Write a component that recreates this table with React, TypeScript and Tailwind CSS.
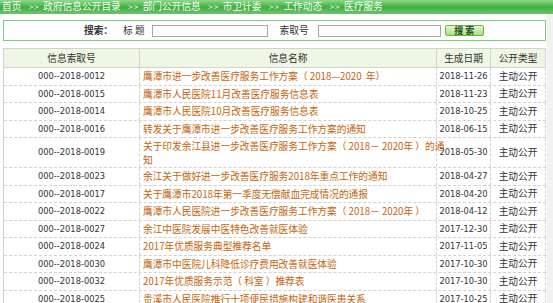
const rows = [
  ["000--2018-0012", "鹰潭市进一步改善医疗服务工作方案（ 2018—2020  年）", "2018-11-26"],
  ["000--2018-0015", "鹰潭市人民医院11月改善医疗服务信息表", "2018-11-23"],
  ["000--2018-0014", "鹰潭市人民医院10月改善医疗服务信息表", "2018-10-25"],
  ["000--2018-0016", "转发关于鹰潭市进一步改善医疗服务工作方案的通知", "2018-06-15"],
  ["000--2018-0019", "关于印发余江县进一步改善医疗服务工作方案（ 2018－ 2020年 ）的通\n知", "2018-05-30"],
  ["000--2018-0023", "余江关于做好进一步改善医疗服务2018年重点工作的通知", "2018-04-27"],
  ["000--2018-0017", "关于鹰潭市2018年第一季度无偿献血完成情况的通报", "2018-04-20"],
  ["000--2018-0022", "鹰潭市人民医院进一步改善医疗服务工作方案（ 2018－ 2020年 ）", "2018-04-12"],
  ["000--2018-0027", "余江中医院发展中医特色改善就医体验", "2017-12-30"],
  ["000--2018-0024", "2017年优质服务典型推荐名单", "2017-11-05"],
  ["000--2018-0030", "鹰潭市中医院儿科降低诊疗费用改善就医体验", "2017-10-30"],
  ["000--2018-0032", "2017年优质服务示范（ 科室 ）推荐表", "2017-10-30"],
  ["000--2018-0025", "贵溪市人民医院推行十项便民措施构建和谐医患关系", "2017-10-25"],
];

const crumbs = ["首页", "政府信息公开目录", "部门公开信息", "市卫计委", "工作动态", "医疗服务"];

const cjk = "font-['Noto_Sans_CJK_SC',sans-serif]";
const num = "font-['DejaVu_Sans',sans-serif] text-[8.3px] text-[#333]";

export default function App() {
  return (
    <div className={`w-[553px] h-[303px] overflow-hidden bg-white ${cjk} text-[9.7px] text-[#333]`}>
      {/* breadcrumb bar */}
      <div className="h-[14px] bg-gradient-to-b from-[#8ad98a] via-[#3fae3f] to-[#6cc46c] text-[#f4fff4] flex items-center gap-[4px] pl-[2px] leading-none">
        {crumbs.map((c, i) => (
          <span key={c} className="flex items-center gap-[4px]">
            {i > 0 && <span className="font-['DejaVu_Sans',sans-serif] text-[6.5px] ml-[3px]">&gt;&gt;</span>}
            <span>{c}</span>
          </span>
        ))}
      </div>

      <div className="flex">
        <div className="w-[547px] pl-[3px] pr-[1px]">
          {/* search */}
          <div className="mt-[6px] h-[21px] border border-[#7ccc7c] bg-white flex items-center">
            <span className="ml-[80px] font-bold">搜索：</span>
            <span className="ml-[10px]">标 题</span>
            <div className="ml-[7px] w-[116px] h-[12px] border border-[#a8a8a8]" />
            <span className="ml-[12px]">索取号</span>
            <div className="ml-[9px] w-[123px] h-[12px] border border-[#a8a8a8]" />
            <div className="ml-[4px] w-[39px] h-[11px] border border-[#6ab84a] rounded-[2px] bg-gradient-to-b from-[#e4f7cf] to-[#a9dd7e] flex items-center justify-center font-bold text-[9px] leading-none text-[#1d4d1d]">
              搜 索
            </div>
          </div>

          {/* table */}
          <div className="mt-[7px] border-l border-t border-[#d2d2d2]">
            <div className="flex h-[19px] bg-[#eef6e4] border-b border-[#d2d2d2]">
              <div className="w-[136px] border-r border-[#d2d2d2] flex items-center justify-center">信息索取号</div>
              <div className="w-[297px] border-r border-[#d2d2d2] flex items-center justify-center">信息名称</div>
              <div className="w-[54px] border-r border-[#d2d2d2] flex items-center justify-center">生成日期</div>
              <div className="w-[55px] border-r border-[#d2d2d2] flex items-center justify-center">公开类型</div>
            </div>
            {rows.map(([id, title, date]) => {
              const lines = title.split("\n");
              const tall = lines.length > 1;
              return (
                <div key={id} className={`flex border-b border-dashed border-[#d2d2d2] ${tall ? "h-[30px]" : "h-[17.5px]"}`}>
                  <div className={`w-[136px] border-r border-dashed border-[#d2d2d2] flex items-center justify-center ${num}`}>{id}</div>
                  <div className="w-[297px] border-r border-dashed border-[#d2d2d2] flex flex-col justify-center pl-[3px] text-[#c4640c] leading-[14px] whitespace-pre">
                    {lines.map((l) => (
                      <span key={l}>{l}</span>
                    ))}
                  </div>
                  <div className={`w-[54px] border-r border-dashed border-[#d2d2d2] flex items-center justify-center ${num}`}>{date}</div>
                  <div className="w-[55px] border-r border-dashed border-[#d2d2d2] flex items-center justify-center">主动公开</div>
                </div>
              );
            })}
          </div>
        </div>
        <div className="flex-1 bg-[#f1f1f1]" />
      </div>
    </div>
  );
}
